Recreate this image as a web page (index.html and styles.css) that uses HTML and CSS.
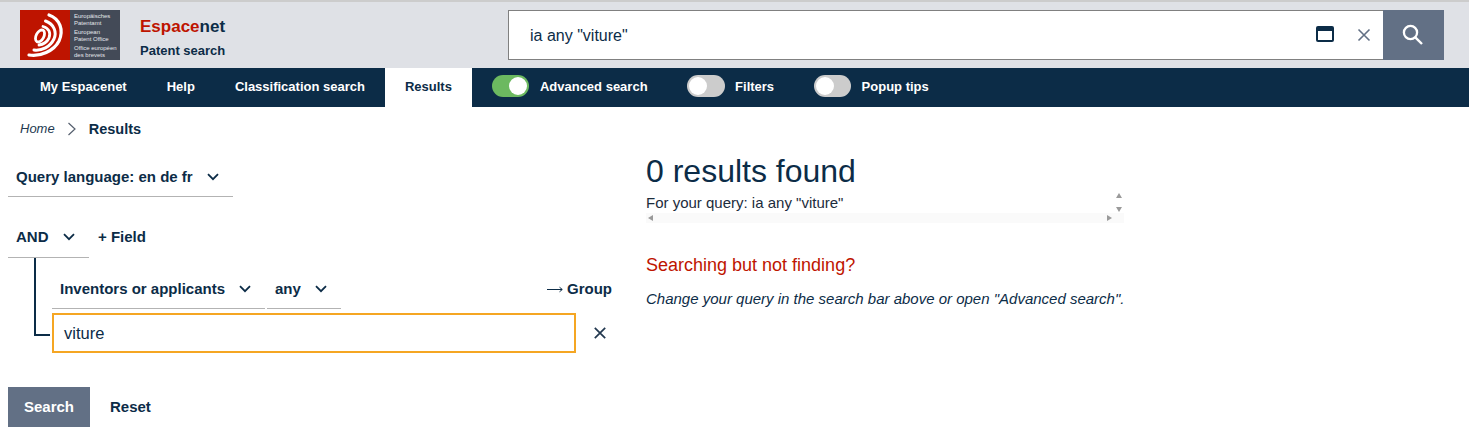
FILE: index.html
```html
<!DOCTYPE html>
<html lang="en">
<head>
<meta charset="utf-8">
<title>Espacenet – results</title>
<link rel="stylesheet" href="styles.css">
</head>
<body>
<header class="top">
  <div class="logo">
    <svg class="logo-mark" width="50" height="50" viewBox="0 0 50 50" aria-hidden="true">
      <rect width="50" height="50" fill="#be1400"/>
      <g fill="none" stroke="#fff" stroke-linecap="round">
        <path d="M29 5 C40 9 44 20 39 31 C34 41 20 47 9 45" stroke-width="3.2"/>
        <path d="M25.5 11 C34 14 37 22 34 29 C30 37 22 41 14 40" stroke-width="3"/>
        <path d="M23 16.5 C29 18 31 23 29 28 C27 32 23 34.5 19 35" stroke-width="2.8"/>
        <ellipse cx="20" cy="26" rx="3.8" ry="6.5" transform="rotate(28 20 26)" stroke-width="2.8"/>
      </g>
    </svg>
    <div class="logo-text">
      <div class="logo-block">Europäisches<br>Patentamt</div>
      <div class="logo-block">European<br>Patent Office</div>
      <div class="logo-block">Office européen<br>des brevets</div>
    </div>
  </div>
  <div class="brand">
    <div class="brand-name"><span class="brand-red">Espace</span>net</div>
    <div class="brand-sub">Patent search</div>
  </div>
  <div class="searchbar">
    <div class="search-box">
      <span class="search-text">ia any "viture"</span>
      <svg class="icon-window" width="18" height="16" viewBox="0 0 18 16" aria-hidden="true">
        <rect x="0" y="0" width="18" height="16" rx="2" fill="#0c2c47"/>
        <rect x="2" y="5" width="14" height="9" fill="#fff"/>
      </svg>
      <svg class="icon-clear" width="14" height="14" viewBox="0 0 14 14" aria-hidden="true">
        <path d="M1.5 1.5 L12.5 12.5 M12.5 1.5 L1.5 12.5" stroke="#627085" stroke-width="1.6" fill="none"/>
      </svg>
    </div>
    <button class="search-btn" aria-label="Search">
      <svg width="22" height="22" viewBox="0 0 22 22" aria-hidden="true">
        <circle cx="8.5" cy="8.5" r="6.6" fill="none" stroke="#fff" stroke-width="2.3"/>
        <path d="M13.3 13.3 L20 20" stroke="#fff" stroke-width="2.4" fill="none"/>
      </svg>
    </button>
  </div>
</header>

<nav class="nav">
  <a class="nav-item">My Espacenet</a>
  <a class="nav-item">Help</a>
  <a class="nav-item">Classification search</a>
  <a class="nav-item is-active">Results</a>
  <div class="toggles">
    <div class="toggle-item"><span class="toggle is-on"><span class="knob"></span></span>Advanced search</div>
    <div class="toggle-item"><span class="toggle"><span class="knob"></span></span>Filters</div>
    <div class="toggle-item"><span class="toggle"><span class="knob"></span></span>Popup tips</div>
  </div>
</nav>

<div class="crumbs">
  <span class="crumb-home">Home</span>
  <svg class="crumb-sep" width="10" height="14" viewBox="0 0 10 14" aria-hidden="true"><path d="M1.5 1 L8 7 L1.5 13" fill="none" stroke="#555f6e" stroke-width="1.2"/></svg>
  <span class="crumb-current">Results</span>
</div>

<main class="content">
  <section class="query">
    <div class="select select-lang">Query language: en de fr
      <svg class="chev" width="12" height="8" viewBox="0 0 12 8" aria-hidden="true"><path d="M1 1.2 L6 6.2 L11 1.2" fill="none" stroke="#0c2c47" stroke-width="1.8"/></svg>
    </div>
    <div class="and-row">
      <div class="select select-and">AND
        <svg class="chev" width="12" height="8" viewBox="0 0 12 8" aria-hidden="true"><path d="M1 1.2 L6 6.2 L11 1.2" fill="none" stroke="#0c2c47" stroke-width="1.8"/></svg>
      </div>
      <span class="add-field">+ Field</span>
    </div>
    <div class="group">
      <div class="connector"></div>
      <div class="fields">
        <div class="field-row">
          <div class="select select-field">Inventors or applicants
            <svg class="chev" width="12" height="8" viewBox="0 0 12 8" aria-hidden="true"><path d="M1 1.2 L6 6.2 L11 1.2" fill="none" stroke="#0c2c47" stroke-width="1.8"/></svg>
          </div>
          <div class="select select-any">any
            <svg class="chev" width="12" height="8" viewBox="0 0 12 8" aria-hidden="true"><path d="M1 1.2 L6 6.2 L11 1.2" fill="none" stroke="#0c2c47" stroke-width="1.8"/></svg>
          </div>
          <span class="add-group">
            <svg class="icon-arrow" width="16" height="7" viewBox="0 0 16 7" aria-hidden="true"><path d="M0 3.5 H15 M12.5 1.2 L15.3 3.5 L12.5 5.8" fill="none" stroke="#0c2c47" stroke-width="1"/></svg>
            Group
          </span>
        </div>
        <div class="input-row">
          <div class="input">viture</div>
          <svg class="icon-remove" width="12" height="12" viewBox="0 0 12 12" aria-hidden="true"><path d="M0.8 0.8 L11.2 11.2 M11.2 0.8 L0.8 11.2" stroke="#22384f" stroke-width="1.7" fill="none"/></svg>
        </div>
      </div>
    </div>
    <div class="actions">
      <button class="btn-search">Search</button>
      <span class="btn-reset">Reset</span>
    </div>
  </section>

  <section class="results">
    <h1 class="results-title">0 results found</h1>
    <div class="query-box">
      <div class="query-line">
        <span>For your query: ia any "viture"</span>
        <div class="vbar"><span class="arr arr-up"></span><span class="arr arr-down"></span></div>
      </div>
      <div class="hbar"><span class="arr arr-left"></span><span class="arr arr-right"></span></div>
    </div>
    <h2 class="hint-title">Searching but not finding?</h2>
    <p class="hint">Change your query in the search bar above or open "Advanced search".</p>
  </section>
</main>
</body>
</html>
```
FILE: styles.css
```css
* { box-sizing: border-box; }
html, body { margin: 0; padding: 0; }
body {
  width: 1469px;
  height: 442px;
  overflow: hidden;
  background: #fff;
  color: #0c2c47;
  font-family: "Liberation Sans", Arial, sans-serif;
  font-size: 14px;
}

.top {
  display: flex;
  align-items: flex-start;
  height: 68px;
  background: #dfe1e6;
  border-top: 2px solid #ccc;
  padding: 8px 25px 0 20px;
}
.logo { display: flex; width: 100px; height: 50px; flex: none; }
.logo-mark { display: block; flex: none; }
.logo-text {
  width: 50px;
  background: #434a57;
  color: #e4e6ea;
  font-size: 6px;
  line-height: 6.8px;
  padding: 3.4px 0 0 4px;
  white-space: nowrap;
  overflow: hidden;
}
.logo-block { margin-bottom: 2.2px; }
.brand { margin-left: 20px; width: 368px; flex: none; padding-top: 8px; font-weight: 700; }
.brand-name { font-size: 17px; line-height: 18px; }
.brand-red { color: #be1400; }
.brand-sub { font-size: 13px; line-height: 15px; margin-top: 7px; }

.searchbar { display: flex; width: 936px; height: 50px; flex: none; }
.search-box {
  display: flex;
  align-items: center;
  flex: 1;
  background: #fff;
  border: 1px solid #808080;
  border-right: 0;
  padding-left: 21px;
}
.search-text { flex: 1; padding-top: 2px; font-size: 16px; color: #0c2c47; }
.icon-window { margin: 0 23px 2px 0; flex: none; }
.icon-clear { margin-right: 12px; flex: none; }
.search-btn {
  display: flex;
  align-items: center;
  justify-content: center;
  width: 61px;
  height: 50px;
  padding: 0 1px 1px 0;
  border: 0;
  background: #627085;
}

.nav {
  display: flex;
  align-items: stretch;
  height: 39px;
  padding-left: 20px;
  background: #0c2c47;
  color: #fff;
  font-size: 13px;
  font-weight: 700;
}
.nav-item { display: flex; align-items: center; padding: 0 20px 3px; }
.nav-item.is-active { background: #fff; color: #0c2c47; }
.toggles { display: flex; align-items: center; margin-left: 20px; gap: 39.5px; padding-bottom: 3px; }
.toggle-item { display: flex; align-items: center; gap: 10.5px; }
.toggle {
  display: flex;
  width: 37.5px;
  height: 22px;
  padding: 2px;
  border-radius: 11px;
  background: #ccc;
}
.toggle.is-on { background: #6cb960; justify-content: flex-end; }
.knob { width: 18px; height: 18px; border-radius: 50%; background: #fff; }

.crumbs { display: flex; align-items: center; height: 43px; padding-left: 20px; }
.crumb-home { font-size: 13px; font-style: italic; color: #22384f; }
.crumb-sep { margin: 0 12px; }
.crumb-current { font-size: 14.5px; font-weight: 700; }

.content { display: flex; }
.query { width: 646px; flex: none; padding-left: 8px; padding-top: 1px; }
.select {
  display: flex;
  align-items: center;
  justify-content: space-between;
  border-bottom: 1px solid #b3b3b3;
  font-size: 15px;
  font-weight: 700;
  color: #0c2c47;
  white-space: nowrap;
}
.select-lang { width: 225px; height: 46px; padding: 6px 14px 0 8px; }
.and-row { display: flex; margin-top: 14px; }
.select-and { width: 81px; height: 47px; padding: 5px 14px 0 8px; }
.add-field { margin-left: 9px; padding-top: 17px; font-size: 15px; font-weight: 700; }
.group { display: flex; }
.connector {
  flex: none;
  width: 16px;
  height: 78px;
  margin: 0 2px 0 26px;
  border-left: 2px solid #0c2c47;
  border-bottom: 2px solid #0c2c47;
}
.fields { width: 560px; flex: none; }
.field-row { display: flex; height: 51px; }
.select-field { width: 213px; height: 51px; padding: 11px 14px 0 8px; }
.select-any { width: 74px; height: 51px; margin-left: 2px; padding: 11px 14px 0 8px; }
.add-group {
  display: flex;
  align-items: center;
  gap: 4px;
  height: 15px;
  margin-left: auto;
  margin-top: 23px;
  font-size: 15px;
  font-weight: 700;
}
.icon-arrow { margin-top: 2px; }
.input-row { display: flex; align-items: center; margin-top: 4px; }
.input {
  display: flex;
  align-items: center;
  width: 524px;
  height: 40px;
  padding: 1px 0 0 10px;
  border: 2px solid #f5a623;
  font-size: 16.5px;
}
.icon-remove { margin-left: 18px; }
.actions { display: flex; align-items: center; margin-top: 34px; }
.btn-search {
  width: 82px;
  height: 40px;
  padding: 0 0 2px;
  border: 0;
  background: #627085;
  color: #fff;
  font: 700 15px "Liberation Sans", Arial, sans-serif;
}
.btn-reset { margin: 0 0 2px 20px; font-size: 15px; font-weight: 700; }

.results { width: 478px; }
.results-title { margin: 0; padding: 1px 0; font-size: 32px; line-height: 40px; font-weight: 400; }
.query-line { display: flex; justify-content: space-between; height: 21px; font-size: 15px; line-height: 21px; color: #1c2c3c; }
.hbar {
  display: flex;
  justify-content: space-between;
  align-items: center;
  height: 10px;
  padding: 0 12px 0 2px;
  background: #fafafa;
}
.vbar { display: flex; flex-direction: column; justify-content: space-between; align-items: center; width: 10px; height: 20px; padding-top: 1px; }
.arr { display: block; width: 0; height: 0; border-style: solid; border-color: transparent; }
.arr-up { border-width: 0 3.5px 5px; border-bottom-color: #9a9a9a; }
.arr-down { border-width: 5px 3.5px 0; border-top-color: #9a9a9a; }
.arr-left { border-width: 3.5px 5px 3.5px 0; border-right-color: #9a9a9a; }
.arr-right { border-width: 3.5px 0 3.5px 5px; border-left-color: #9a9a9a; }
.hint-title { margin: 32px 0 0; font-size: 18px; line-height: 21px; font-weight: 400; color: #be1400; }
.hint { margin: 14px 0 0; font-size: 15px; line-height: 18px; font-style: italic; white-space: nowrap; }
```
